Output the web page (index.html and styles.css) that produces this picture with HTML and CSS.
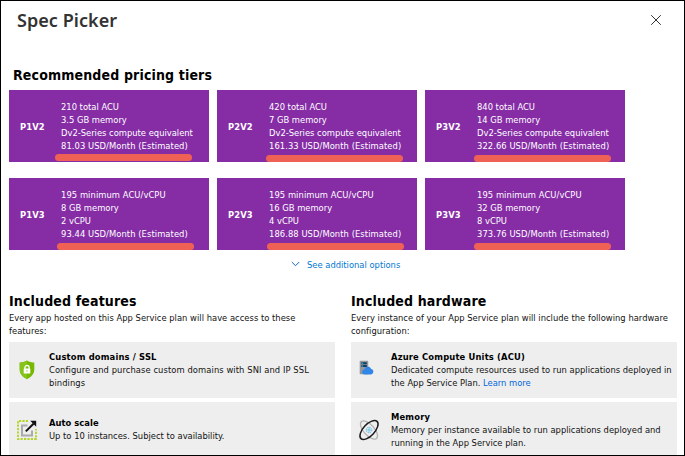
FILE: index.html
```html
<!DOCTYPE html>
<html lang="en">
<head>
<meta charset="utf-8">
<title>Spec Picker</title>
<link rel="stylesheet" href="styles.css">
</head>
<body>
<main class="blade">
  <header class="top">
    <h1>Spec Picker</h1>
    <svg class="close" viewBox="0 0 12 12"><path d="M1.2 1.2l9.6 9.6M10.8 1.2l-9.6 9.6"/></svg>
  </header>
  <h2 class="tiers-title">Recommended pricing tiers</h2>
  <section class="tiers">
    <article class="tier"><b>P1V2</b><p><span>210 total ACU</span><span>3.5 GB memory</span><span>Dv2-Series compute equivalent</span><span class="price">81.03 USD/Month (Estimated)</span></p><i class="mark m1"></i></article>
    <article class="tier"><b>P2V2</b><p><span>420 total ACU</span><span>7 GB memory</span><span>Dv2-Series compute equivalent</span><span class="price">161.33 USD/Month (Estimated)</span></p><i class="mark m2"></i></article>
    <article class="tier"><b>P3V2</b><p><span>840 total ACU</span><span>14 GB memory</span><span>Dv2-Series compute equivalent</span><span class="price">322.66 USD/Month (Estimated)</span></p><i class="mark m2"></i></article>
    <article class="tier"><b>P1V3</b><p><span class="price">195 minimum ACU/vCPU</span><span>8 GB memory</span><span>2 vCPU</span><span class="price">93.44 USD/Month (Estimated)</span></p><i class="mark m3"></i></article>
    <article class="tier"><b>P2V3</b><p><span class="price">195 minimum ACU/vCPU</span><span>16 GB memory</span><span>4 vCPU</span><span class="price">186.88 USD/Month (Estimated)</span></p><i class="mark m4"></i></article>
    <article class="tier"><b>P3V3</b><p><span class="price">195 minimum ACU/vCPU</span><span>32 GB memory</span><span>8 vCPU</span><span class="price">373.76 USD/Month (Estimated)</span></p><i class="mark m2"></i></article>
  </section>
  <div class="more">
    <svg viewBox="0 0 9 6"><path d="M.8 1l3.7 3.7L8.200 1"/></svg>
    <a>See additional options</a>
  </div>
  <div class="columns">
    <section>
      <h2>Included features</h2>
      <p class="intro">Every app hosted on this App Service plan will have access to these<br>features:</p>
      <article class="card">
        <div class="icon"><svg width="16" height="20" viewBox="0 0 16 20"><path d="M8 .5c2.500 1.600 4.700 2 7.300 2.100v7c0 4.700-3.300 7.500-7.300 9.700C4 17.100.7 14.300.7 9.600v-7C3.300 2.500 5.500 2.100 8 .5z" fill="#76b900"/><path d="M8 .5v18.800C4 17.100.7 14.300.7 9.600v-7C3.300 2.500 5.500 2.100 8 .5z" fill="#85c41a"/><path d="M5.900 9V7.600a2.100 2.100 0 0 1 4.200 0V9" fill="none" stroke="#fff" stroke-width="1.300"/><rect x="4.700" y="8.500" width="6.600" height="5" rx=".5" fill="#fff"/><path d="M8 10v1.800" stroke="#a9d663"/></svg></div>
        <div><h3>Custom domains / SSL</h3><p class="wide">Configure and purchase custom domains with SNI and IP SSL<br>bindings</p></div>
      </article>
      <article class="card">
        <div class="icon"><svg width="20" height="20" viewBox="0 0 20 20"><path d="M11 1H1v18h18V9" fill="none" stroke="#b3d52b" stroke-width="1.900" stroke-dasharray="2.200 1.200"/><path d="M10.500 5.500H5v10h10v-5" fill="none" stroke="#aaa" stroke-width="2"/><path d="M8.800 11.400l7.700-7.700" stroke="#111" stroke-width="2"/><path d="M13.200.8h6v6z" fill="#111"/></svg></div>
        <div><h3 class="plain">Auto scale</h3><p>Up to 10 instances. Subject to availability.</p></div>
      </article>
    </section>
    <section>
      <h2>Included hardware</h2>
      <p class="intro">Every instance of your App Service plan will include the following hardware<br>configuration:</p>
      <article class="card">
        <div class="icon server"><svg width="14" height="16" viewBox="0 0 14 16"><rect x=".7" y=".8" width="8.500" height="13.400" rx=".6" fill="#94979b"/><path d="M2.300 2.200h5.500v2H2.300zM2.300 5h5.500v2H2.300z" fill="#123c60"/><path d="M2.700 3.200h1.500M2.700 6h1.500" stroke="#3bc6f3"/><path d="M5.800 14.500c-3.600 0-3.500-4.500-.3-4.900.7-4.200 5.700-4.200 6.600-.5 3.200.3 3 5.400-.4 5.400z" fill="#3187e8"/></svg></div>
        <div><h3>Azure Compute Units (ACU)</h3><p>Dedicated compute resources used to run applications deployed in<br>the App Service Plan. <a>Learn more</a></p></div>
      </article>
      <article class="card">
        <div class="icon memory"><svg width="20" height="20" viewBox="0 0 20 20" fill="none"><ellipse cx="10" cy="10" rx="11.300" ry="5.300" transform="rotate(48 10 10)" stroke="#b5b5b5" stroke-width="1.300"/><ellipse cx="10" cy="10" rx="11.800" ry="5.700" transform="rotate(-47 10 10)" stroke="#1b1b1b" stroke-width="1.500"/><g stroke="#55bce4"><circle cx="10" cy="10" r="2.800" stroke-dasharray="1.300 .9"/><path d="M7.500 10h5M10 7.500v5" stroke-width=".8"/></g></svg></div>
        <div><h3>Memory</h3><p>Memory per instance available to run applications deployed and<br>running in the App Service plan.</p></div>
      </article>
    </section>
  </div>
</main>
</body>
</html>
```
FILE: styles.css
```css
* { box-sizing: border-box; }
body, h1, h2, h3, p { margin: 0; }
body { background: #fff; color: #111; font: 9.3px/13px "DejaVu Sans Condensed", "DejaVu Sans", sans-serif; font-stretch: condensed; }
.blade { width: 685px; height: 456px; overflow: hidden; border: 1px solid #000; padding: 0 7px 0 8px; white-space: nowrap; }
.top { height: 64px; display: flex; justify-content: space-between; padding: 6px 15px 0 8px; }
h1 { font: 600 18px/26px "Noto Sans", "Open Sans", sans-serif; color: #333; letter-spacing: .05px; }
.close { width: 12px; height: 12px; margin-top: 7px; fill: none; stroke: #333; stroke-width: 1; }
h2 { font-size: 14px; line-height: 20px; font-weight: bold; color: #000; letter-spacing: .15px; }
.tiers-title { height: 25px; padding-left: 4px; }
.tiers { display: grid; grid-template-columns: repeat(3, 200px); grid-auto-rows: 72px; gap: 16px 8px; }
.tier { position: relative; display: flex; background: #862da6; color: #fff; padding-top: 10px; }
.tier b { width: 52px; padding: 20px 0 0 11px; letter-spacing: .15px; }
.tier span { display: block; }
.tier .price { letter-spacing: .07px; }
.mark { position: absolute; width: 137px; height: 7px; border-radius: 4px; background: #f06155; }
.m1 { left: 46px; top: 64px; }
.m2 { left: 49px; top: 65px; }
.m3 { left: 48px; top: 65px; }
.m4 { left: 50px; top: 65px; }
.more { height: 40px; padding: 8px 0 0 282px; display: flex; gap: 7px; }
.more a { color: #0078d4; }
.more svg { width: 9px; height: 6px; margin-top: 3px; fill: none; stroke: #1268c8; stroke-width: 1; }
.columns { display: grid; grid-template-columns: 326px 326px; gap: 16px; }
.columns h2 { height: 21px; line-height: 22px; }
.intro { height: 31px; letter-spacing: .02px; }
.card { height: 56px; margin-bottom: 4px; padding-bottom: 1px; background: #eee; display: flex; align-items: center; }
.icon { width: 40px; padding-right: 4px; display: flex; justify-content: center; }
.server { padding-right: 10px; padding-bottom: 4px; }
.memory { padding-right: 5px; }
.icon svg { overflow: visible; }
h3 { font-size: 9.3px; line-height: 12px; color: #000; letter-spacing: .17px; }
.plain { letter-spacing: .05px; }
.wide { letter-spacing: .08px; }
a { color: #0066dc; }
```
